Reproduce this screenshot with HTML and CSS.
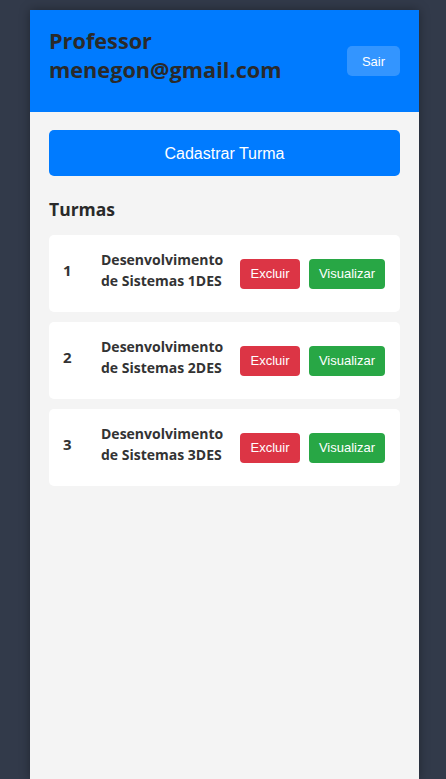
FILE: index.html
```html
<!DOCTYPE html>
<html lang="pt-BR">
<head>
<meta charset="utf-8">
<title>Turmas</title>
<link rel="stylesheet" href="styles.css">
</head>
<body>
<div class="app">
  <header class="topbar">
    <h2 class="topbar-title">Professor menegon@gmail.com</h2>
    <button class="btn btn-logout">Sair</button>
  </header>
  <main class="content">
    <button class="btn btn-primary">Cadastrar Turma</button>
    <h3 class="section-title">Turmas</h3>
    <div class="list">
      <div class="card">
        <span class="card-num">1</span>
        <span class="card-name">Desenvolvimento de Sistemas 1DES</span>
        <div class="card-actions">
          <button class="btn btn-danger">Excluir</button>
          <button class="btn btn-success">Visualizar</button>
        </div>
      </div>
      <div class="card">
        <span class="card-num">2</span>
        <span class="card-name">Desenvolvimento de Sistemas 2DES</span>
        <div class="card-actions">
          <button class="btn btn-danger">Excluir</button>
          <button class="btn btn-success">Visualizar</button>
        </div>
      </div>
      <div class="card">
        <span class="card-num">3</span>
        <span class="card-name">Desenvolvimento de Sistemas 3DES</span>
        <div class="card-actions">
          <button class="btn btn-danger">Excluir</button>
          <button class="btn btn-success">Visualizar</button>
        </div>
      </div>
    </div>
  </main>
</div>
</body>
</html>
```

FILE: styles.css
```css
* { box-sizing: border-box; }
html, body { height: 100%; }
body {
  margin: 0;
  padding-top: 10px;
  background: #323a4a;
  font-family: "Open Sans", "Noto Sans", sans-serif;
  color: #333;
}
.app {
  margin-left: 30px;
  width: 389px;
  min-height: 769px;
  background: #f4f4f4;
  box-shadow: 0 0 10px rgba(0,0,0,0.35);
}
.topbar {
  background: #007bff;
  height: 102px;
  padding: 0 19px;
  display: flex;
  align-items: center;
  justify-content: space-between;
}
.topbar-title {
  margin: 0 0 12px;
  font-size: 21.7px;
  line-height: 29.5px;
  font-weight: 700;
  color: #2a2a2a;
  width: 260px;
}
.btn {
  border: none;
  border-radius: 4px;
  color: #fff;
  font-family: "Liberation Sans", Arial, sans-serif;
  font-size: 13px;
  cursor: pointer;
  padding: 0;
}
.btn-logout {
  background: #3395ff;
  width: 53px;
  height: 30px;
  border-radius: 5px;
}
.content {
  padding: 18px 19px;
}
.btn-primary {
  display: block;
  width: 100%;
  height: 46px;
  padding-top: 2px;
  background: #007bff;
  font-size: 16px;
  border-radius: 5px;
}
.section-title {
  margin: 20px 0 13px;
  font-size: 17.5px;
  line-height: 26px;
  font-weight: 700;
  color: #2a2a2a;
}
.list {
  display: flex;
  flex-direction: column;
  gap: 10px;
}
.card {
  background: #fff;
  border-radius: 5px;
  height: 77px;
  padding: 0 15px 0 14px;
  display: flex;
  align-items: center;
}
.card-num {
  width: 38px;
  margin-bottom: 7px;
  font-size: 15px;
  font-weight: 700;
}
.card-name {
  width: 125px;
  margin-bottom: 7px;
  font-size: 14px;
  line-height: 21px;
  font-weight: 700;
}
.card-actions {
  margin-left: auto;
  display: flex;
  gap: 9px;
}
.btn-danger {
  background: #dc3545;
  width: 60px;
  height: 30px;
}
.btn-success {
  background: #28a745;
  width: 76px;
  height: 30px;
}
```
